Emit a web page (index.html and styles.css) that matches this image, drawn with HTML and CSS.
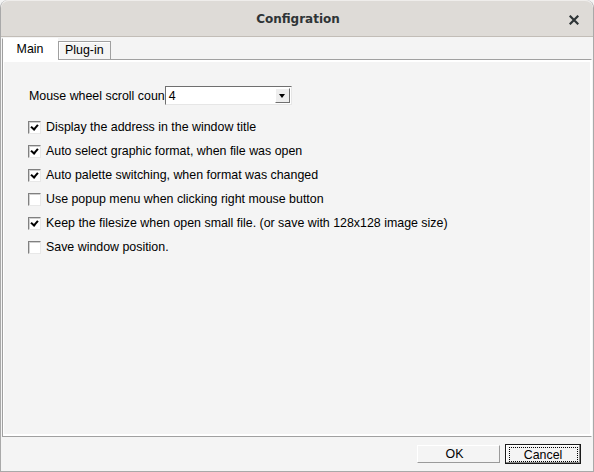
FILE: index.html
```html
<!DOCTYPE html>
<html lang="en">
<head>
    <meta charset="UTF-8">
    <title>Configration</title>
    <link rel="stylesheet" href="styles.css">
</head>
<body>
    <div class="window">
        <div class="titlebar">
            <span class="title">Configration</span>
            <svg class="close" width="10" height="10" viewBox="0 0 10 10">
                <path d="M1.5 1.5 L8.5 8.5 M8.5 1.5 L1.5 8.5" stroke="#2e3436" stroke-width="2.2" stroke-linecap="square"/>
            </svg>
        </div>

        <div class="tabs">
            <div class="tab active">Main</div>
            <div class="tab">Plug-in</div>
        </div>

        <div class="panel">
            <div class="panel-inner">
                <div class="field">
                    <span>Mouse wheel scroll coun</span>
                    <div class="combo">
                        <span class="combo-value">4</span>
                        <span class="combo-btn"><i class="arrow"></i></span>
                    </div>
                </div>

                <label class="check"><span class="box on"></span>Display the address in the window title</label>
                <label class="check"><span class="box on"></span>Auto select graphic format, when file was open</label>
                <label class="check"><span class="box on"></span>Auto palette switching, when format was changed</label>
                <label class="check"><span class="box"></span>Use popup menu when clicking right mouse button</label>
                <label class="check"><span class="box on"></span>Keep the filesize when open small file. (or save with 128x128 image size)</label>
                <label class="check"><span class="box"></span>Save window position.</label>
            </div>
        </div>

        <div class="buttons">
            <button class="btn ok">OK</button>
            <button class="btn default"><span class="focus">Cancel</span></button>
        </div>
    </div>
</body>
</html>
```

FILE: styles.css
```css
html, body {
    margin: 0;
    background: #f4f4f4;
}
.window {
    width: 594px;
    height: 472px;
    box-sizing: border-box;
    border: 1px solid #a9a9a9;
    border-top: none;
    border-radius: 8px 8px 0 0;
    background: #f4f4f4;
    display: flex;
    flex-direction: column;
    font-family: "Liberation Sans", Arial, sans-serif;
    font-size: 12.4px;
    color: #000;
}

/* title bar */
.titlebar {
    height: 37px;
    flex: none;
    box-sizing: border-box;
    background: #dedbd7;
    border-bottom: 1px solid #c2bdb7;
    border-radius: 8px 8px 0 0;
    border-top: 1px solid #efedeb;
    display: flex;
    align-items: center;
    justify-content: center;
    position: relative;
}
.title {
    font-family: "DejaVu Sans", sans-serif;
    font-weight: bold;
    font-size: 12px;
    color: #2e3436;
    padding-left: 2px;
}
.close {
    position: absolute;
    right: 14px;
    top: 14px;
}

/* tabs */
.tabs {
    display: flex;
    align-items: flex-end;
    height: 22px;
    padding-left: 1px;
    flex: none;
}
.tab {
    box-sizing: border-box;
    height: 18px;
    padding: 0 6px;
    line-height: 17px;
    background: #f4f4f4;
    border: 1px solid #a0a0a0;
    border-bottom: none;
    box-shadow: inset 1px 1px 0 #fff;
}
.tab.active {
    height: 22px;
    width: 56px;
    text-align: center;
    line-height: 20px;
    background: #fff;
    border-color: #fff;
    border-left-color: #a0a0a0;
    position: relative;
    z-index: 1;
    margin-bottom: -1px;
}

/* tab panel */
.panel {
    flex: 1;
    margin: 0 1px 0 1px;
    border: 1px solid #a0a0a0;
    border-right-color: #fff;
    display: flex;
}
.panel-inner {
    flex: 1;
    border: 2px solid #fff;
    border-left-width: 1px;
    border-right-width: 1px;
    padding: 24px 0 0 25px;
    display: flex;
    flex-direction: column;
}
.field {
    display: flex;
    align-items: center;
    height: 19px;
    margin-bottom: 10px;
}
.combo {
    width: 127px;
    height: 19px;
    box-sizing: border-box;
    background: #fff;
    border: 1px solid;
    border-color: #6f6f6f #e6e6e6 #e6e6e6 #6f6f6f;
    display: flex;
    align-items: center;
    justify-content: space-between;
}
.combo-value {
    padding-left: 3px;
}
.combo-btn {
    width: 15px;
    height: 15px;
    box-sizing: border-box;
    margin-right: 1px;
    background: #eeeeee;
    border: 1px solid;
    border-color: #fff #707070 #707070 #fff;
    display: flex;
    align-items: center;
    justify-content: center;
}
.arrow {
    width: 0;
    height: 0;
    border-left: 3px solid transparent;
    border-right: 3px solid transparent;
    border-top: 4px solid #000;
}

/* checkboxes */
.check {
    display: flex;
    align-items: center;
    height: 24px;
    margin-left: -1px;
}
.box {
    width: 13px;
    height: 13px;
    box-sizing: border-box;
    margin-right: 5px;
    background: #fff;
    border: 1px solid;
    border-color: #808080 #e8e8e8 #e8e8e8 #808080;
    box-shadow: inset 1px 1px 0 #d0d0d0;
    position: relative;
}
.box.on::after {
    content: "";
    position: absolute;
    left: 3px;
    top: 1px;
    width: 3px;
    height: 5px;
    border: solid #000;
    border-width: 0 2px 2px 0;
    transform: rotate(40deg);
}

/* dialog buttons */
.buttons {
    height: 34px;
    flex: none;
    display: flex;
    justify-content: flex-end;
    align-items: center;
    gap: 5px;
    padding-right: 12px;
}
.btn {
    font-family: "Liberation Sans", Arial, sans-serif;
    font-size: 12.4px;
    color: #000;
    background: #f4f4f4;
    padding: 0;
    margin: 0;
}
.ok {
    width: 83px;
    height: 18px;
    padding-right: 8px;
    border: 1px solid;
    border-color: #fff #9a9a9a #9a9a9a #fff;
}
.default {
    width: 76px;
    height: 20px;
    border: 1px solid #1a1a1a;
    box-shadow: inset -1px -1px 0 #8a8a8a, inset 1px 1px 0 #fff;
    display: flex;
    align-items: center;
    justify-content: center;
}
.focus {
    display: block;
    width: 69px;
    height: 15px;
    line-height: 14px;
    box-sizing: border-box;
    border: 1px dotted #000;
}
```
